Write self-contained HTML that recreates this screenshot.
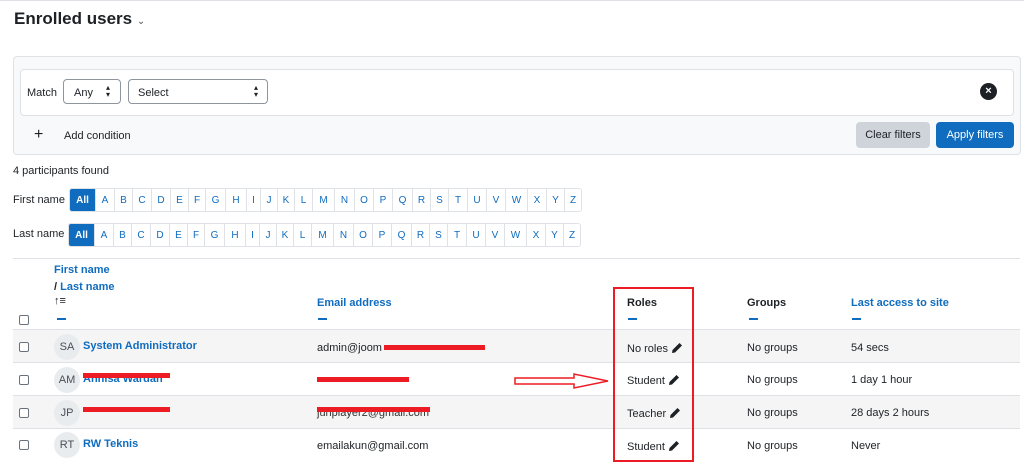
<!DOCTYPE html><html><head><meta charset="utf-8"><style>
body{margin:0;width:1024px;height:468px;background:#fff;font-family:"Liberation Sans",sans-serif;color:#1d2125;position:relative;overflow:hidden;font-size:11px}
.a{position:absolute}
.lnk{color:#0f6cbf;font-weight:bold}
.lb{position:absolute;display:flex;height:22px;border:1px solid #dee2e6;border-radius:3px;overflow:hidden}
.lb span{display:flex;align-items:center;justify-content:center;border-left:1px solid #dee2e6;color:#0f6cbf;font-size:10px;height:22px}
.lb span.all{background:#0f6cbf;color:#fff;border:none;font-weight:bold;width:25px}
.row{position:absolute;left:13px;width:1007px;height:32px;border-top:1px solid #dee2e6}
.cb{position:absolute;width:8px;height:8px;border:1px solid #6a737b;border-radius:2px;background:#fff}
.av{position:absolute;left:54px;width:26px;height:26px;border-radius:50%;background:#e9ecef;color:#495057;font-size:11px;display:flex;align-items:center;justify-content:center}
.dash{position:absolute;width:9px;height:2px;background:#0f6cbf}
.pen{display:inline-block;vertical-align:-2px;margin-left:3px}
.red{position:absolute;background:#ed1c24;height:5px}
</style></head><body>
<div class="a" style="left:0;top:0;width:1024px;height:1px;background:#dee2e6"></div>
<div class="a" style="left:14px;top:9px;font-size:17px;font-weight:bold">Enrolled users <span style="font-size:10px;font-weight:normal;color:#555">⌄</span></div>
<div class="a" style="left:13px;top:56px;width:1006px;height:97px;background:#f8f9fa;border:1px solid #dee2e6;border-radius:4px"></div>
<div class="a" style="left:20px;top:69px;width:992px;height:45px;background:#fff;border:1px solid #dee2e6;border-radius:4px"></div>
<div class="a" style="left:27px;top:87px">Match</div>
<div class="a" style="left:63px;top:79px;width:58px;height:25px;border:1px solid #8f959e;border-radius:4px;box-sizing:border-box"><span class="a" style="left:10px;top:7px">Any</span><span class="a" style="left:42px;top:4px;font-size:8px;line-height:7px">▴<br>▾</span></div>
<div class="a" style="left:128px;top:79px;width:140px;height:25px;border:1px solid #8f959e;border-radius:4px;box-sizing:border-box"><span class="a" style="left:9px;top:7px">Select</span><span class="a" style="left:125px;top:4px;font-size:8px;line-height:7px">▴<br>▾</span></div>
<div class="a" style="left:980px;top:83px;width:17px;height:17px;border-radius:50%;background:#1d2125;color:#fff;font-size:11px;font-weight:bold;text-align:center;line-height:17px">×</div>
<div class="a" style="left:34px;top:127px;font-size:16px;line-height:16px">+</div>
<div class="a" style="left:64px;top:130px">Add condition</div>
<div class="a" style="left:856px;top:122px;width:74px;height:26px;background:#ced4da;border-radius:4px;text-align:center;line-height:26px">Clear filters</div>
<div class="a" style="left:936px;top:122px;width:78px;height:26px;background:#0f6cbf;color:#fff;border-radius:4px;text-align:center;line-height:26px">Apply filters</div>
<div class="a" style="left:13px;top:165px">4 participants found</div>
<div class="a" style="left:13px;top:194px">First name</div>
<div class="a" style="left:13px;top:228px">Last name</div>
<div class="lb" style="left:69px;top:188px" id="l1"></div>
<div class="lb" style="left:68px;top:223px" id="l2"></div>

<div class="a" style="left:13px;top:258px;width:1007px;height:1px;background:#dee2e6"></div>
<div class="a lnk" style="left:54px;top:264px">First name</div>
<div class="a lnk" style="left:54px;top:281px"><span style="color:#1d2125">/</span> Last name</div>
<div class="a" style="left:54px;top:295px;font-size:11px;font-weight:bold">↑≡</div>
<div class="dash" style="left:57px;top:318px"></div>
<div class="cb" style="left:19px;top:315px"></div>
<div class="a lnk" style="left:317px;top:297px">Email address</div><div class="dash" style="left:318px;top:318px"></div>
<div class="a" style="left:627px;top:297px;font-weight:bold">Roles</div><div class="dash" style="left:628px;top:318px"></div>
<div class="a" style="left:747px;top:297px;font-weight:bold">Groups</div><div class="dash" style="left:749px;top:318px"></div>
<div class="a lnk" style="left:851px;top:297px">Last access to site</div><div class="dash" style="left:852px;top:318px"></div>

<div class="row" style="top:329px;background:#f5f5f5"></div>
<div class="row" style="top:362px"></div>
<div class="row" style="top:395px;background:#f5f5f5"></div>
<div class="row" style="top:428px"></div>

<div class="cb" style="left:19px;top:342px"></div><div class="av" style="top:334px">SA</div>
<div class="a lnk" style="left:83px;top:340px">System Administrator</div>
<div class="a" style="left:317px;top:342px">admin@joom</div><div class="red" style="left:384px;top:345px;width:101px"></div>

<div class="cb" style="left:19px;top:375px"></div><div class="av" style="top:367px">AM</div>
<div class="a lnk" style="left:83px;top:373px">Annisa Wardah</div><div class="red" style="left:83px;top:373px;width:87px"></div>
<div class="red" style="left:317px;top:377px;width:92px"></div>

<div class="cb" style="left:19px;top:408px"></div><div class="av" style="top:400px">JP</div>
<div class="red" style="left:83px;top:407px;width:87px"></div>
<div class="a" style="left:317px;top:407px;color:#333">junplayer2@gmail.com</div><div class="red" style="left:317px;top:407px;width:113px"></div>

<div class="cb" style="left:19px;top:440px"></div><div class="av" style="top:432px">RT</div>
<div class="a lnk" style="left:83px;top:438px">RW Teknis</div>
<div class="a" style="left:317px;top:440px">emailakun@gmail.com</div>

<svg width="0" height="0" style="position:absolute"><defs><symbol id="p" viewBox="0 0 12 12"><path d="M8.5 1 L11 3.5 L4 10.5 L1 11 L1.5 8 Z" fill="#1d2125"/></symbol></defs></svg>
<div class="a" style="left:627px;top:342px">No roles<svg class="pen" width="12" height="12"><use href="#p"/></svg></div>
<div class="a" style="left:627px;top:374px">Student<svg class="pen" width="12" height="12"><use href="#p"/></svg></div>
<div class="a" style="left:627px;top:407px">Teacher<svg class="pen" width="12" height="12"><use href="#p"/></svg></div>
<div class="a" style="left:627px;top:440px">Student<svg class="pen" width="12" height="12"><use href="#p"/></svg></div>
<div class="a" style="left:747px;top:342px">No groups</div>
<div class="a" style="left:747px;top:374px">No groups</div>
<div class="a" style="left:747px;top:407px">No groups</div>
<div class="a" style="left:747px;top:440px">No groups</div>
<div class="a" style="left:851px;top:342px">54 secs</div>
<div class="a" style="left:851px;top:374px">1 day 1 hour</div>
<div class="a" style="left:851px;top:407px">28 days 2 hours</div>
<div class="a" style="left:851px;top:440px">Never</div>

<div class="a" style="left:613px;top:287px;width:77px;height:171px;border:2px solid #ed1c24"></div>
<svg class="a" style="left:513px;top:372px" width="98" height="18"><path d="M2 6 L61 6 L61 2 L95 9 L61 16 L61 12 L2 12 Z" fill="none" stroke="#ed1c24" stroke-width="1.5"/></svg>
<script>
var L="ABCDEFGHIJKLMNOPQRSTUVWXYZ".split(""),W=[19,18,19,19,18,17,20,21,14,17,17,18,22,20,19,19,20,18,18,19,19,19,22,19,18,17];
["l1","l2"].forEach(function(id){var e=document.getElementById(id),h='<span class="all">All</span>';L.forEach(function(c,i){h+='<span style="width:'+(W[i]-1)+'px">'+c+'</span>'});e.innerHTML=h;});
</script>
</body></html>
